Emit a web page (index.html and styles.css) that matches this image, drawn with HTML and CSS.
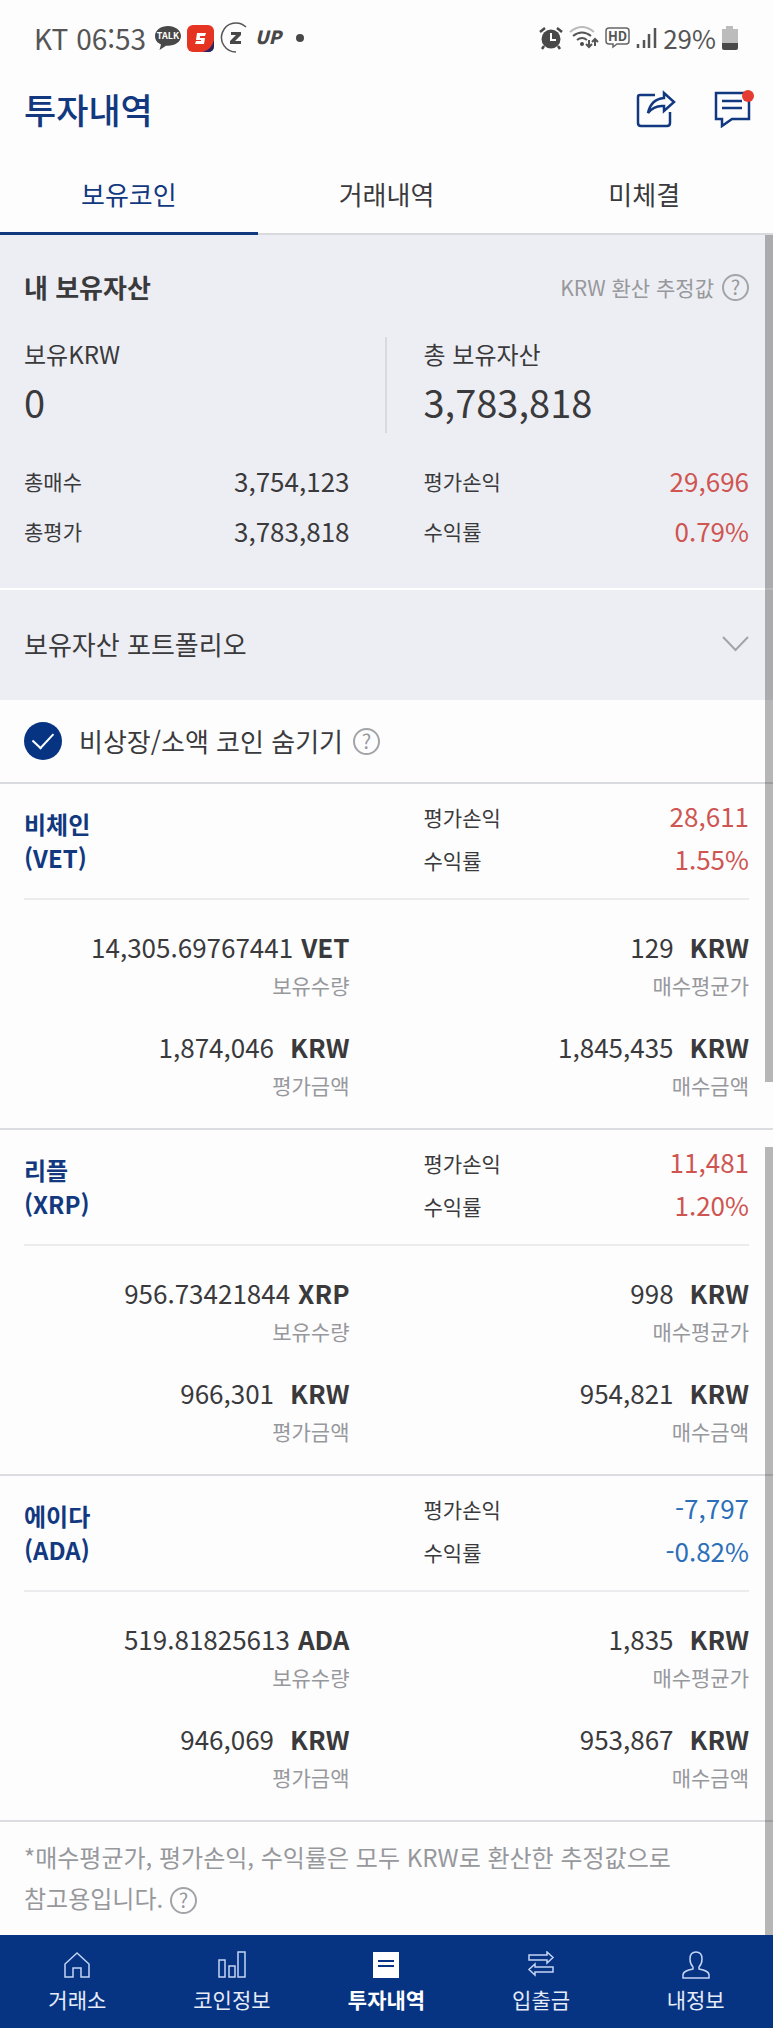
FILE: index.html
```html
<!DOCTYPE html>
<html lang="ko">
<head>
    <meta charset="UTF-8">
    <meta name="viewport" content="width=device-width, initial-scale=1">
    <title>투자내역</title>
    <link rel="stylesheet" href="styles.css">
</head>

<body>
<!-- phone status bar -->
<div class="status">
    <div class="status-group">
        <span class="status-time">KT 06:53</span>
        <svg width="26" height="26" viewBox="0 0 26 26">
            <path d="M13 1C6 1 0 5 0 11c0 4 2.400 7 6 8.500L4.500 25l6.500-4.200h2c7 0 13-4 13-9.800S20 1 13 1z" fill="#484848"/>
            <text x="13" y="14" text-anchor="middle" font-size="9" font-weight="700" fill="#fff">TALK</text>
        </svg>
        <svg width="27" height="27" viewBox="0 0 27 27">
            <rect width="27" height="27" rx="6" fill="#e63422"/>
            <path d="M27 15v6q0 6-6 6h-5q9-3 11-12z" fill="#2a2260"/>
            <path d="M10 8h9l-1 3h-5v2h5l-1 6H8l1-3h5v-1H9z" fill="#fff"/>
        </svg>
        <svg width="28" height="32" viewBox="0 0 28 32">
            <path d="M26 5A14.500 14.500 0 1 0 16 30" fill="none" stroke="#555" stroke-width="1.500"/>
            <path d="M11 10h10v3l-6 6h6v3H10v-3l6-6h-5z" fill="#484848"/>
        </svg>
        <svg width="32" height="28" viewBox="0 0 32 28">
            <text x="1" y="20" font-size="18" font-weight="900" font-style="italic" fill="#484848">UP</text>
        </svg>
        <span class="status-dot"></span>
    </div>
    <div class="status-group status-right">
        <svg width="24" height="24" viewBox="0 0 24 24">
            <circle cx="12" cy="13" r="9.500" fill="#484848"/>
            <path d="M1 6l5-4M23 6l-5-4M5 20l-2 3M19 20l2 3" stroke="#484848" stroke-width="2.500" fill="none"/>
            <path d="M12 7v7h5" stroke="#fff" stroke-width="2" fill="none"/>
        </svg>
        <svg width="30" height="24" viewBox="0 0 30 24">
            <g fill="none" stroke-width="2">
                <path d="M1 6q12-10 24 0" stroke="#bbb"/>
                <path d="M4 10q9-7 18 0M8 14q5-4 10 0" stroke="#555"/>
                <path d="M20 14v7M17 18l3 3 3-3M26 20v-7M23 16l3-3 3 3" stroke="#555"/>
            </g>
            <circle cx="13" cy="18" r="2" fill="#484848"/>
        </svg>
        <svg width="25" height="22" viewBox="0 0 25 22">
            <path d="M4 1h17q3 0 3 3v10q0 3-3 3h-9l-4 3v-3H4q-3 0-3-3V4q0-3 3-3z" fill="none" stroke="#666" stroke-width="1.500"/>
            <text x="12.500" y="14" text-anchor="middle" font-size="13" font-weight="700" fill="#555">HD</text>
        </svg>
        <svg width="21" height="22" viewBox="0 0 21 22">
            <path d="M2 17v4M8 13v8M13 7v14M19 1v20" stroke="#555" stroke-width="2.500"/>
        </svg>
        <span class="status-battery">29%</span>
        <svg width="16" height="24" viewBox="0 0 16 24">
            <path d="M4 0h7v3h5v14H0V3h4z" fill="#bcbcbc"/>
            <path d="M0 17h16v5q0 2-2 2H2q-2 0-2-2z" fill="#484848"/>
        </svg>
    </div>
</div>

<header class="header">
    <h1 class="title">투자내역</h1>
    <button class="icon-button" type="button" aria-label="공유">
        <svg width="40" height="38" viewBox="0 0 40 38" fill="none" stroke="#12397f" stroke-width="2.500">
            <path d="M19 5H4Q2 5 2 7v26q0 3 3 3h26q3 0 3-3V22"/>
            <path d="M28 3l10 9-10 9v-5q-10-1-16 7Q15 9 28 8z"/>
        </svg>
    </button>
    <button class="icon-button" type="button" aria-label="알림">
        <svg width="42" height="38" viewBox="0 0 42 38" fill="none" stroke="#12397f" stroke-width="2.500">
            <path d="M3 3h33v26H19L9 36v-7H3zM9 11h20M9 18h20"/>
            <circle cx="35" cy="6" r="6" fill="#e53b30" stroke="none"/>
        </svg>
    </button>
</header>

<nav class="tabs">
    <a class="tab tab-active" href="#coins">보유코인</a>
    <a class="tab" href="#history">거래내역</a>
    <a class="tab" href="#pending">미체결</a>
</nav>

<main class="content">
    <section class="summary">
        <div class="summary-head">
            <h2>내 보유자산</h2>
            <span class="estimate">KRW 환산 추정값 <button class="help" type="button">?</button></span>
        </div>
        <div class="totals">
            <dl class="total">
                <dt>보유KRW</dt>
                <dd>0</dd>
            </dl>
            <dl class="total">
                <dt>총 보유자산</dt>
                <dd>3,783,818</dd>
            </dl>
        </div>
        <div class="columns">
            <dl class="pairs">
                <dt>총매수</dt><dd>3,754,123</dd>
                <dt>총평가</dt><dd>3,783,818</dd>
            </dl>
            <dl class="pairs">
                <dt>평가손익</dt><dd class="up">29,696</dd>
                <dt>수익률</dt><dd class="up">0.79%</dd>
            </dl>
        </div>
    </section>

    <button class="portfolio" type="button">
        보유자산 포트폴리오
        <svg width="27" height="16" viewBox="0 0 27 16" fill="none" stroke="#a3a4a8" stroke-width="2">
            <path d="M1 1l12.500 13L26 1"/>
        </svg>
    </button>

    <div class="filter">
        <input class="check" type="checkbox" id="hide-small" checked>
        <label for="hide-small">비상장/소액 코인 숨기기</label>
        <button class="help" type="button">?</button>
    </div>

    <article class="coin">
        <div class="coin-head columns">
            <h3>비체인<br>(VET)</h3>
            <dl class="pairs">
                <dt>평가손익</dt><dd class="up">28,611</dd>
                <dt>수익률</dt><dd class="up">1.55%</dd>
            </dl>
        </div>
        <dl class="coin-body columns">
            <div class="figure"><dt>보유수량</dt><dd>14,305.69767441<b class="coin-unit">VET</b></dd></div>
            <div class="figure"><dt>매수평균가</dt><dd>129<b>KRW</b></dd></div>
            <div class="figure"><dt>평가금액</dt><dd>1,874,046<b>KRW</b></dd></div>
            <div class="figure"><dt>매수금액</dt><dd>1,845,435<b>KRW</b></dd></div>
        </dl>
    </article>

    <article class="coin">
        <div class="coin-head columns">
            <h3>리플<br>(XRP)</h3>
            <dl class="pairs">
                <dt>평가손익</dt><dd class="up">11,481</dd>
                <dt>수익률</dt><dd class="up">1.20%</dd>
            </dl>
        </div>
        <dl class="coin-body columns">
            <div class="figure"><dt>보유수량</dt><dd>956.73421844<b class="coin-unit">XRP</b></dd></div>
            <div class="figure"><dt>매수평균가</dt><dd>998<b>KRW</b></dd></div>
            <div class="figure"><dt>평가금액</dt><dd>966,301<b>KRW</b></dd></div>
            <div class="figure"><dt>매수금액</dt><dd>954,821<b>KRW</b></dd></div>
        </dl>
    </article>

    <article class="coin">
        <div class="coin-head columns">
            <h3>에이다<br>(ADA)</h3>
            <dl class="pairs">
                <dt>평가손익</dt><dd class="down">-7,797</dd>
                <dt>수익률</dt><dd class="down">-0.82%</dd>
            </dl>
        </div>
        <dl class="coin-body columns">
            <div class="figure"><dt>보유수량</dt><dd>519.81825613<b class="coin-unit">ADA</b></dd></div>
            <div class="figure"><dt>매수평균가</dt><dd>1,835<b>KRW</b></dd></div>
            <div class="figure"><dt>평가금액</dt><dd>946,069<b>KRW</b></dd></div>
            <div class="figure"><dt>매수금액</dt><dd>953,867<b>KRW</b></dd></div>
        </dl>
    </article>

    <p class="note">*매수평균가, 평가손익, 수익률은 모두 KRW로 환산한 추정값으로<br>참고용입니다. <button class="help" type="button">?</button></p>

    <!-- scroll indicator over the right edge -->
    <div class="scroll" aria-hidden="true">
        <span class="scroll-first"></span>
        <span class="scroll-second"></span>
    </div>
</main>

<nav class="bottom-nav">
    <a href="#exchange">
        <svg width="28" height="28" viewBox="0 0 28 28">
            <path d="M14 2L2 13v13h8v-9h8v9h8V13z"/>
        </svg>
        거래소
    </a>
    <a href="#info">
        <svg width="28" height="28" viewBox="0 0 28 28">
            <path d="M1 9h6v17H1zM11 15h6v11h-6zM20 1h7v25h-7z"/>
        </svg>
        코인정보
    </a>
    <a class="current" href="#invest">
        <svg width="28" height="28" viewBox="0 0 28 28">
            <path d="M1 1h26v26H1z" fill="#fff" stroke="none"/>
            <path d="M6 10h16M6 15h16" stroke="#063483" stroke-width="2"/>
        </svg>
        투자내역
    </a>
    <a href="#transfer">
        <svg width="28" height="28" viewBox="0 0 28 28">
            <path d="M2 4h18V1l6 5.500-6 5.500V9H2zM26 16H8v-3l-6 5.500L8 24v-3h18z"/>
        </svg>
        입출금
    </a>
    <a href="#me">
        <svg width="28" height="28" viewBox="0 0 28 28">
            <path d="M14 1c-4 0-6 3-6 7 0 3 1 6 3 8v2c-5 1-10 2-10 6v3h26v-3c0-4-5-5-10-6v-2c2-2 3-5 3-8 0-4-2-7-6-7z"/>
        </svg>
        내정보
    </a>
</nav>
</body>
</html>
```
FILE: styles.css
```css
* {
    box-sizing: border-box;
}
body {
    margin: 0;
    background: #fdfdfe;
    color: #3a3a3c;
    font-family: "Noto Sans CJK KR", sans-serif;
    font-size: 26px;
}
h1, h2, h3, dl, dd, p {
    margin: 0;
}
button {
    padding: 0;
    border: 0;
    background: none;
    color: inherit;
    font: inherit;
}
a {
    color: inherit;
    text-decoration: none;
}
svg {
    display: block;
    flex: none;
}

.status {
    display: flex;
    justify-content: space-between;
    padding: 18px 35px 17px 34px;
    color: #555;
    line-height: 40px;
}
.status-group {
    display: flex;
    align-items: center;
    gap: 6px;
}
.status-time {
    margin-right: 3px;
    font-size: 28px;
}
.status-dot {
    width: 8px;
    height: 8px;
    margin-left: 4px;
    border-radius: 50%;
    background: #484848;
}

.header {
    display: flex;
    align-items: center;
    gap: 37px;
    padding: 9px 18px 11px 24px;
    line-height: 50px;
}
.title {
    flex: 1;
    color: #12397f;
    font-size: 35px;
    font-weight: 500;
}

.tabs {
    display: flex;
    background: linear-gradient(#d9dadd, #d9dadd) bottom / 100% 2px no-repeat;
}
.tab {
    flex: 1;
    padding: 31px 0 20px;
    border-bottom: 3px solid transparent;
    line-height: 36px;
    text-align: center;
}
.tab-active {
    border-color: #12397f;
    color: #12397f;
}

.content {
    position: relative;
}
.summary {
    padding: 32px 24px;
    background: #edeef3;
}
.summary-head {
    display: flex;
    justify-content: space-between;
    margin-bottom: 30px;
    line-height: 40px;
}
.summary-head h2 {
    font-size: 26px;
    font-weight: 700;
}
.estimate {
    display: flex;
    align-items: center;
    gap: 8px;
    color: #97989c;
    font-size: 21px;
}
.help {
    width: 27px;
    height: 27px;
    border: 2px solid #a3a4a8;
    border-radius: 50%;
    color: #97989c;
    font-size: 20px;
    line-height: 22px;
    text-align: center;
}

.columns {
    display: grid;
    grid-template-columns: 1fr 1fr;
    column-gap: 74px;
}
.totals {
    display: grid;
    grid-template-columns: 1fr 1fr;
    margin-bottom: 23px;
}
.total {
    font-size: 24px;
    line-height: 34px;
}
.total + .total {
    margin-left: -2px;
    padding-left: 37px;
    border-left: 2px solid #d9dadd;
}
.total dd {
    font-size: 38px;
    line-height: 62px;
}
.pairs {
    display: grid;
    grid-template-columns: auto 1fr;
    line-height: 50px;
}
.pairs dt {
    font-size: 21px;
}
.pairs dd {
    text-align: right;
}
.pairs .up {
    color: #cf5552;
}
.pairs .down {
    color: #2c6fb8;
}

.portfolio {
    display: flex;
    justify-content: space-between;
    align-items: center;
    width: 100%;
    padding: 34px 24px 36px;
    border-top: 2px solid #fff;
    background: #edeef3;
    line-height: 40px;
}

.filter {
    display: flex;
    align-items: center;
    padding: 21px 24px;
    border-bottom: 2px solid #d9dadd;
    line-height: 40px;
}
.filter label {
    margin: 0 10px 0 17px;
}
.check {
    display: grid;
    place-items: center;
    width: 38px;
    height: 38px;
    margin: 0;
    border-radius: 50%;
    background: #c4c5c9;
    appearance: none;
}
.check:checked {
    background: #063483;
}
.check::after {
    content: "";
    width: 10px;
    height: 18px;
    margin-bottom: 6px;
    border: solid #fff;
    border-width: 0 2px 2px 0;
    transform: rotate(43deg);
}

.coin {
    border-bottom: 2px solid #dcdde0;
}
.coin-head {
    margin: 0 24px;
    padding: 12px 0 16px;
    border-bottom: 2px solid #ececee;
}
.coin-head h3 {
    padding-top: 11px;
    color: #12397f;
    font-size: 24px;
    font-weight: 700;
    line-height: 34px;
}
.coin-head .pairs {
    line-height: 43px;
}
.coin-head .pairs dd {
    line-height: 39px;
}
.coin-body {
    row-gap: 24px;
    padding: 27px 24px 25px;
}
.figure {
    display: flex;
    flex-direction: column-reverse;
    text-align: right;
}
.figure dt {
    color: #97989c;
    font-size: 21px;
    line-height: 36px;
}
.figure dd {
    line-height: 40px;
}
.figure b {
    margin-left: 16px;
    font-weight: 700;
}
.figure .coin-unit {
    margin-left: 8px;
}

.note {
    padding: 14px 24px 17px;
    color: #97989c;
    font-size: 24px;
    line-height: 41px;
}

.scroll {
    display: flex;
    position: absolute;
    top: 0;
    right: 0;
    bottom: 0;
    flex-direction: column;
    gap: 65px;
    width: 8px;
}
.scroll span {
    background: rgba(0, 0, 0, 0.28);
}
.scroll-first {
    flex: 847;
}
.scroll-second {
    flex: 788;
}

.bottom-nav {
    display: flex;
    background: #063483;
    color: #e6ecf8;
    font-size: 21px;
}
.bottom-nav a {
    display: flex;
    flex: 1;
    flex-direction: column;
    align-items: center;
    gap: 5px;
    padding: 16px 0 14px;
    line-height: 30px;
}
.bottom-nav svg {
    fill: none;
    stroke: #c3d4f3;
    stroke-width: 1.5;
}
.bottom-nav .current {
    color: #fff;
    font-weight: 700;
}
```
